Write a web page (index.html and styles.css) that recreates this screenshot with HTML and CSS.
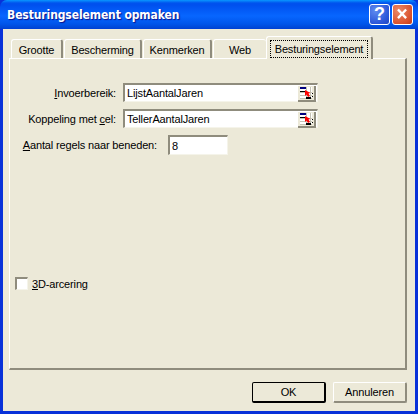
FILE: index.html
```html
<!DOCTYPE html>
<html>
<head>
    <meta charset="utf-8">
    <title>Besturingselement opmaken</title>
    <link rel="stylesheet" href="styles.css">
</head>
<body>
    <div class="window">
        <div class="titlebar">
            <span class="title">Besturingselement opmaken</span>
            <span class="capbtn help">?</span>
            <span class="capbtn close">
                <svg width="21" height="21" viewBox="0 0 21 21"><path d="M5.500 5L14.500 14.500M14.500 5L5.500 14.500" stroke="#fff" stroke-width="2.600" fill="none"/></svg>
            </span>
        </div>
        <div class="client">
            <div class="tabs">
                <div class="tab t1">Grootte</div>
                <div class="tab t2">Bescherming</div>
                <div class="tab t3">Kenmerken</div>
                <div class="tab t4">Web</div>
                <div class="tab active"><span class="focus">Besturingselement</span></div>
            </div>
            <div class="panel">
                <div class="row r1">
                    <label class="lbl l1"><u>I</u>nvoerbereik:</label>
                    <div class="field wide">LijstAantalJaren
                        <span class="refbtn">
                            <svg width="16" height="14" viewBox="0 0 16 14">
                                <rect x="2" y="1" width="12" height="12" fill="#fff"/>
                                <path d="M2 6.500H14M2 9.500H14M2 12.500H14M8.500 1V13M12.500 1V13" stroke="#c4c2b4" fill="none"/>
                                <rect x="2" y="1" width="6" height="2" fill="#000080"/>
                                <rect x="2" y="5" width="6" height="1" fill="#000"/>
                                <rect x="8" y="11" width="5" height="2" fill="#000"/>
                                <rect x="14" y="7" width="1" height="1" fill="#000"/>
                                <rect x="14" y="10" width="1" height="1" fill="#000"/>
                                <path d="M7 4L7 10L8.500 8.500L10 11L12 10L10.500 7.500L12.500 7Z" fill="#f00"/>
                            </svg>
                        </span>
                    </div>
                </div>
                <div class="row r2">
                    <label class="lbl l1">Koppeling met <u>c</u>el:</label>
                    <div class="field wide">TellerAantalJaren
                        <span class="refbtn">
                            <svg width="16" height="14" viewBox="0 0 16 14">
                                <rect x="2" y="1" width="12" height="12" fill="#fff"/>
                                <path d="M2 6.500H14M2 9.500H14M2 12.500H14M8.500 1V13M12.500 1V13" stroke="#c4c2b4" fill="none"/>
                                <rect x="2" y="1" width="6" height="2" fill="#000080"/>
                                <rect x="2" y="5" width="6" height="1" fill="#000"/>
                                <rect x="8" y="11" width="5" height="2" fill="#000"/>
                                <rect x="14" y="7" width="1" height="1" fill="#000"/>
                                <rect x="14" y="10" width="1" height="1" fill="#000"/>
                                <path d="M7 4L7 10L8.500 8.500L10 11L12 10L10.500 7.500L12.500 7Z" fill="#f00"/>
                            </svg>
                        </span>
                    </div>
                </div>
                <div class="row r3">
                    <label class="lbl l3"><u>A</u>antal regels naar beneden:</label>
                    <div class="field small">8</div>
                </div>
                <div class="checkrow">
                    <span class="check"></span>
                    <label class="lbl"><u>3</u>D-arcering</label>
                </div>
            </div>
            <div class="footer">
                <div class="btn default">OK</div>
                <div class="btn">Annuleren</div>
            </div>
        </div>
    </div>
</body>
</html>
```

FILE: styles.css
```css
html, body {
    margin: 0;
    padding: 0;
}

body {
    width: 418px;
    height: 414px;
    overflow: hidden;
    background: #0831d9;
    font-family: "Liberation Sans", sans-serif;
    font-size: 11px;
    letter-spacing: -0.15px;
    color: #000;
}

.window {
    width: 418px;
    height: 414px;
    display: flex;
    flex-direction: column;
    background: #0831d9;
    border-radius: 7px 7px 0 0;
}

.titlebar {
    height: 29px;
    display: flex;
    align-items: center;
    padding: 0 5px 0 7px;
    border-radius: 7px 7px 0 0;
    background: linear-gradient(to bottom, #0997ff 0, #0053ee 3px, #0050ee 5px, #0766ff 16px, #0055ea 24px, #0046d5 28px, #003dd7 29px);
}

.title {
    flex: 1;
    font-family: "DejaVu Sans Condensed", "DejaVu Sans", sans-serif;
    font-stretch: condensed;
    font-size: 12px;
    font-weight: bold;
    letter-spacing: -0.1px;
    color: #fff;
    text-shadow: 1px 1px 1px #0f1089;
}

.capbtn {
    width: 21px;
    height: 21px;
    border: 1px solid #fff;
    border-radius: 3px;
    box-sizing: border-box;
    margin-left: 2px;
    display: flex;
    align-items: center;
    justify-content: center;
    color: #fff;
}

.help {
    background: radial-gradient(circle at 30% 30%, #5f8cf0, #2a55d8 70%, #2048c0);
    font-size: 18px;
    font-weight: bold;
}

.close {
    background: radial-gradient(circle at 30% 30%, #ec8a68, #d9512c 70%, #c03a18);
}

.client {
    flex: 1;
    margin: 0 3px 3px 3px;
    background: #ece9d8;
    display: flex;
    flex-direction: column;
    padding: 8px 8px 0 6px;
}

.tabs {
    display: flex;
    align-items: flex-end;
    height: 21px;
    padding-left: 2px;
    position: relative;
    z-index: 1;
}

.tab {
    height: 19px;
    box-sizing: border-box;
    border: 1px solid #fff;
    border-bottom: none;
    border-right: 2px solid #8f8c7d;
    border-radius: 3px 3px 0 0;
    display: flex;
    align-items: center;
    justify-content: center;
    padding-top: 2px;
    margin-right: 1px;
}

.t1 { width: 52px; }
.t2 { width: 78px; }
.t3 { width: 69px; }
.t4 { width: 53px; border-right: none; margin-right: 0; }

.tab.active {
    width: 107px;
    height: 23px;
    margin-bottom: -1px;
    background: #ece9d8;
    padding-top: 1px;
}

.focus {
    outline: 1px dotted #000;
    padding: 2px 4px 2px;
}

.panel {
    height: 312px;
    box-sizing: border-box;
    border: 1px solid #fff;
    border-right: 2px solid #8f8c7d;
    border-bottom: 2px solid #8f8c7d;
    padding: 24px 0 0 0;
}

.row {
    display: flex;
    align-items: center;
}

.r2 { margin-top: 7px; }
.r3 { margin-top: 7px; }

.lbl {
    white-space: nowrap;
}

.l1 {
    width: 106px;
    text-align: right;
    margin-right: 7px;
}

.l3 {
    width: 147px;
    text-align: right;
    margin-right: 11px;
}

.field {
    box-sizing: border-box;
    background: #fff;
    border-top: 2px solid #8f8c7d;
    border-left: 2px solid #8f8c7d;
    border-right: 1px solid #f5f4ea;
    border-bottom: 1px solid #f5f4ea;
    padding-left: 2px;
    display: flex;
    align-items: center;
    justify-content: space-between;
}

.wide {
    width: 195px;
    height: 19px;
}

.small {
    width: 60px;
    height: 20px;
}

.refbtn {
    width: 18px;
    height: 16px;
    box-sizing: border-box;
    background: #ece9d8;
    border-right: 2px solid #8f8c7d;
    border-bottom: 2px solid #8f8c7d;
    display: block;
    margin-top: 1px;
    margin-right: 1px;
}

.refbtn svg {
    display: block;
}

.checkrow {
    display: flex;
    align-items: center;
    margin: 122px 0 0 5px;
}

.check {
    width: 13px;
    height: 13px;
    box-sizing: border-box;
    background: #fff;
    border-top: 2px solid #8f8c7d;
    border-left: 2px solid #8f8c7d;
    border-right: 1px solid #f5f4ea;
    border-bottom: 1px solid #f5f4ea;
    margin-right: 4px;
}

.footer {
    display: flex;
    justify-content: flex-end;
    gap: 7px;
    padding: 12px 0 0 0;
}

.btn {
    width: 74px;
    height: 21px;
    box-sizing: border-box;
    display: flex;
    align-items: center;
    justify-content: center;
    background: #ece9d8;
    border-radius: 2px;
    border-top: 1px solid #fff;
    border-left: 1px solid #fff;
    border-right: 2px solid #8f8c7d;
    border-bottom: 2px solid #8f8c7d;
}

.default {
    border: 1px solid #000;
    border-right: 2px solid #000;
    border-bottom: 2px solid #000;
}
```
